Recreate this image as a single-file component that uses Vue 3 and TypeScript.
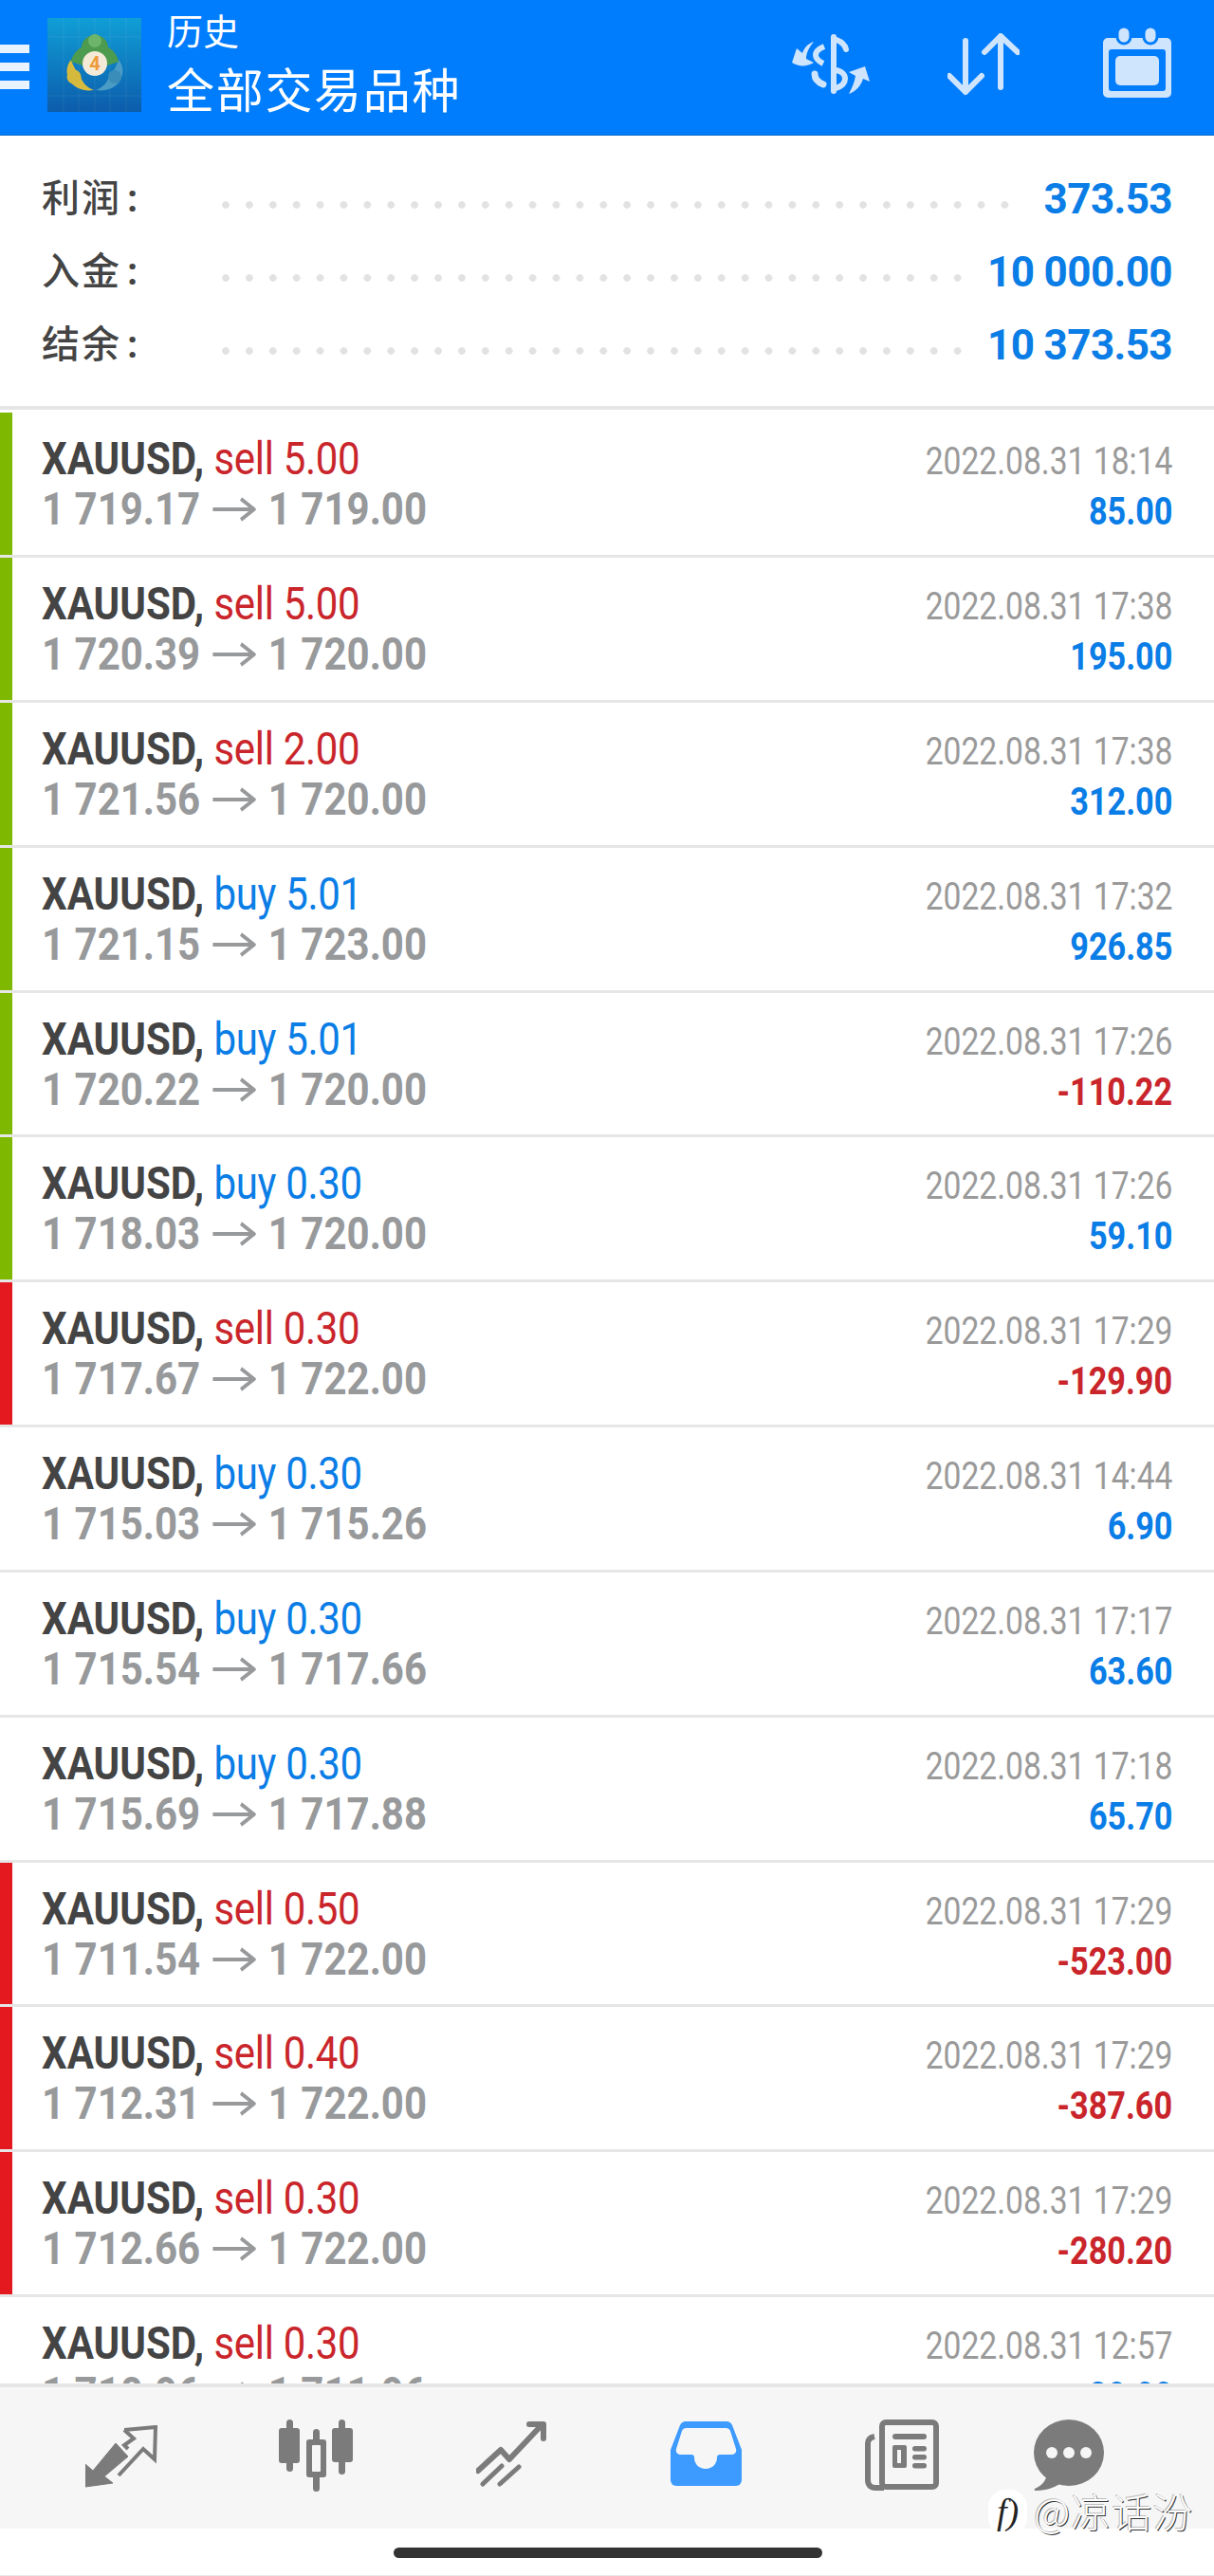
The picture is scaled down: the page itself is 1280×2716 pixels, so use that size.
<script setup lang="ts">
interface Trade { side: 'buy' | 'sell'; lot: string; open: string; close: string; time: string; profit: string; mark: '' | 'green' | 'red' }
const trades: Trade[] = [
  { side: 'sell', lot: '5.00', open: '1 719.17', close: '1 719.00', time: '2022.08.31 18:14', profit: '85.00', mark: 'green' },
  { side: 'sell', lot: '5.00', open: '1 720.39', close: '1 720.00', time: '2022.08.31 17:38', profit: '195.00', mark: 'green' },
  { side: 'sell', lot: '2.00', open: '1 721.56', close: '1 720.00', time: '2022.08.31 17:38', profit: '312.00', mark: 'green' },
  { side: 'buy', lot: '5.01', open: '1 721.15', close: '1 723.00', time: '2022.08.31 17:32', profit: '926.85', mark: 'green' },
  { side: 'buy', lot: '5.01', open: '1 720.22', close: '1 720.00', time: '2022.08.31 17:26', profit: '-110.22', mark: 'green' },
  { side: 'buy', lot: '0.30', open: '1 718.03', close: '1 720.00', time: '2022.08.31 17:26', profit: '59.10', mark: 'green' },
  { side: 'sell', lot: '0.30', open: '1 717.67', close: '1 722.00', time: '2022.08.31 17:29', profit: '-129.90', mark: 'red' },
  { side: 'buy', lot: '0.30', open: '1 715.03', close: '1 715.26', time: '2022.08.31 14:44', profit: '6.90', mark: '' },
  { side: 'buy', lot: '0.30', open: '1 715.54', close: '1 717.66', time: '2022.08.31 17:17', profit: '63.60', mark: '' },
  { side: 'buy', lot: '0.30', open: '1 715.69', close: '1 717.88', time: '2022.08.31 17:18', profit: '65.70', mark: '' },
  { side: 'sell', lot: '0.50', open: '1 711.54', close: '1 722.00', time: '2022.08.31 17:29', profit: '-523.00', mark: 'red' },
  { side: 'sell', lot: '0.40', open: '1 712.31', close: '1 722.00', time: '2022.08.31 17:29', profit: '-387.60', mark: 'red' },
  { side: 'sell', lot: '0.30', open: '1 712.66', close: '1 722.00', time: '2022.08.31 17:29', profit: '-280.20', mark: 'red' },
  { side: 'sell', lot: '0.30', open: '1 710.96', close: '1 711.96', time: '2022.08.31 12:57', profit: '30.00', mark: '' },
]
const summary = [
  { label: '利润', value: '373.53' },
  { label: '入金', value: '10 000.00' },
  { label: '结余', value: '10 373.53' },
]
</script>

<template>
  <div class="screen">
    <header class="header">
      <div class="burger"><i></i><i></i><i></i></div>
      <svg class="logo" viewBox="0 0 99 99">
        <defs>
          <linearGradient id="lg" x1="0" y1="0" x2="0" y2="1">
            <stop offset="0" stop-color="#109ed6" />
            <stop offset="1" stop-color="#0c5cab" />
          </linearGradient>
        </defs>
        <rect width="99" height="99" fill="url(#lg)" />
        <path d="M17 0V99M33 0V99M50 0V99M66 0V99M83 0V99M0 20H99M0 82H99" stroke="#fff" stroke-opacity=".07" />
        <path d="M25 44c-5 6-6 14-2 21 4 8 14 13 26 11-8-3-13-9-14-15-4-4-8-10-10-17z" fill="#d8bb3e" />
        <circle cx="28" cy="62" r="7.5" fill="#d5b93d" />
        <path d="M75 44c5 6 6 14 2 21-4 8-14 13-26 11 8-3 13-9 14-15 4-4 8-10 10-17z" fill="#4a9cc6" />
        <circle cx="71" cy="62" r="7" fill="#3a8db8" />
        <path d="M50 18c-8 0-14 6-14 13-6 3-10 9-11 15l12 4c2-5 7-8 13-8s11 3 13 8l12-4c-1-6-5-12-11-15 0-7-6-13-14-13z" fill="#4d9b4f" />
        <circle cx="50" cy="24" r="7" fill="#6cb56a" />
        <circle cx="50" cy="48" r="13" fill="#f3ead8" />
        <text x="50" y="55" class="logo-four">4</text>
      </svg>
      <div class="titles">
        <div class="title-small">历史</div>
        <div class="title-big">全部交易品种</div>
      </div>
      <div class="actions">
        <svg class="act-money" viewBox="0 0 84 64">
          <g fill="none" stroke="#cfe4fd" stroke-width="6">
            <path d="M45 3V60" stroke-linecap="round" />
            <path d="M48 6c5 2 9 5 10 10" stroke-linecap="round" />
            <path d="M47 38c7 1 10 5 10 9s-3 8-10 10" />
            <path d="M35 13c-7 3-9 6-9 9s2 6 8 9" />
            <path d="M25 42c0 5 4 9 9 11" stroke-width="7" stroke-linecap="round" />
          </g>
          <path d="M24 8c-6 2-10 6-12 12l-6-5-5 15c8 5 16 4 23 0l-8-4c0-6 3-12 8-18z" fill="#cfe4fd" />
          <path d="M61 63c8-3 13-9 15-16l7 3-5-16-17 6 7 4c-1 7-4 13-7 19z" fill="#cfe4fd" />
        </svg>
        <svg class="act-sort" viewBox="0 0 76 66">
          <path d="M19 8V62M2 45L19 62L36 45" stroke="#cfe4fd" stroke-width="6" stroke-linecap="round" stroke-linejoin="round" fill="none" />
          <path d="M56 57V3M39 20L56 3L74 20" stroke="#cfe4fd" stroke-width="6" stroke-linecap="round" stroke-linejoin="round" fill="none" />
        </svg>
        <svg class="act-cal" viewBox="0 0 72 74">
          <path fill-rule="evenodd" d="M5 10H67a5 5 0 0 1 5 5V68a5 5 0 0 1-5 5H5a5 5 0 0 1-5-5V15a5 5 0 0 1 5-5z M9 22a3 3 0 0 0-3 3V63a3 3 0 0 0 3 3H63a3 3 0 0 0 3-3V25a3 3 0 0 0-3-3z" fill="#cfe4fd" />
          <rect x="13" y="29" width="46" height="31" rx="5" fill="#cfe4fd" />
          <rect x="15" y="-2" width="14" height="18" rx="7" fill="#cfe4fd" stroke="#007dfc" stroke-width="3" />
          <rect x="43" y="-2" width="14" height="18" rx="7" fill="#cfe4fd" stroke="#007dfc" stroke-width="3" />
        </svg>
      </div>
    </header>

    <section class="summary">
      <div v-for="s in summary" :key="s.label" class="sum-row">
        <span class="sum-label">{{ s.label }}<b class="colon">:</b></span>
        <span class="dots"></span>
        <span class="sum-value">{{ s.value }}</span>
      </div>
    </section>

    <main class="list">
      <div v-for="(t, i) in trades" :key="i" class="row">
        <span v-if="t.mark" class="mark" :class="t.mark"></span>
        <div class="line">
          <span class="narrow"><b class="sym">XAUUSD,</b> <span :class="t.side">{{ t.side }} {{ t.lot }}</span></span>
          <span class="narrow-r time">{{ t.time }}</span>
        </div>
        <div class="line">
          <span class="narrow prices">{{ t.open }} <svg class="arrow" viewBox="0 0 52 26"><path d="M0 13H49M34 2L50 13L34 24" stroke="#97999b" stroke-width="4" fill="none" /></svg> {{ t.close }}</span>
          <span class="narrow-r profit" :class="{ loss: t.profit.startsWith('-') }">{{ t.profit }}</span>
        </div>
      </div>
    </main>

    <nav class="tabs">
      <svg class="tab t1" viewBox="0 0 76 66">
        <path d="M0 65V41L8 48L32 19L45 33L20 54L29 61Z" fill="#7b7b7b" stroke="#7b7b7b" stroke-width="1" stroke-linejoin="round" />
        <path d="M41 5L74 2L73 36L61 25L35 53M41 5L51 14L41 21L45 25" fill="none" stroke="#7b7b7b" stroke-width="4" />
      </svg>
      <svg class="tab t2" viewBox="0 0 78 76">
        <rect x="8" y="0" width="7" height="55" rx="3.5" fill="#7b7b7b" />
        <rect x="0" y="9" width="22" height="37" rx="3" fill="#7b7b7b" />
        <rect x="36" y="10" width="7" height="66" rx="3.5" fill="#7b7b7b" />
        <rect x="29" y="21" width="21" height="40" rx="3" fill="#7b7b7b" />
        <rect x="35" y="27" width="9" height="28" rx="1" fill="#f6f6f6" />
        <rect x="63" y="0" width="7" height="58" rx="3.5" fill="#7b7b7b" />
        <rect x="56" y="9" width="22" height="36" rx="3" fill="#7b7b7b" />
      </svg>
      <svg class="tab t3" viewBox="0 0 74 69">
        <path d="M2 52L26 30L35 40L68 5M56 3H71V18" fill="none" stroke="#7b7b7b" stroke-width="6" stroke-linecap="round" stroke-linejoin="round" />
        <path d="M7 66L27 47M25 66L45 48" fill="none" stroke="#7b7b7b" stroke-width="5" stroke-linecap="round" />
      </svg>
      <svg class="tab t4" viewBox="0 0 75 69">
        <path d="M16 0H59c3 0 5 2 6 4L75 30V62a6 6 0 0 1-6 6H6a6 6 0 0 1-6-6V30L10 4c1-2 3-4 6-4z" fill="#3d9bff" />
        <path d="M17 7H58c3 0 4 1 5 3L69 29c1 3-1 6-4 6H52c-2 0-3 1-3 3 0 7-5 12-12 12s-12-5-12-12c0-2-1-3-3-3H10c-3 0-5-3-4-6L12 10c1-2 2-3 5-3z" fill="#f6f6f6" />
      </svg>
      <svg class="tab t5" viewBox="0 0 78 75">
        <rect x="18" y="3" width="57" height="68" rx="4" fill="none" stroke="#7b7b7b" stroke-width="6" />
        <path d="M10 18c-5 1-7 3-7 7V64c0 5 3 8 8 8H20" fill="none" stroke="#7b7b7b" stroke-width="6" />
        <rect x="29" y="15" width="36" height="6" rx="3" fill="#7b7b7b" />
        <path fill-rule="evenodd" d="M31 27H42a2 2 0 0 1 2 2V49a2 2 0 0 1-2 2H31a2 2 0 0 1-2-2V29a2 2 0 0 1 2-2z M34 32V46H38V32z" fill="#7b7b7b" />
        <rect x="50" y="28" width="15" height="5.5" rx="2.7" fill="#7b7b7b" />
        <rect x="50" y="37" width="15" height="5.5" rx="2.7" fill="#7b7b7b" />
        <rect x="50" y="46" width="15" height="5.5" rx="2.7" fill="#7b7b7b" />
      </svg>
      <svg class="tab t6" viewBox="0 0 74 75">
        <ellipse cx="37" cy="35" rx="37" ry="35" fill="#7b7b7b" />
        <path d="M14 56C14 64 8 70 1 73c-1 1 0 2 1 2C14 75 24 71 32 65Z" fill="#7b7b7b" />
        <circle cx="19" cy="35" r="6" fill="#f6f6f6" />
        <circle cx="37" cy="35" r="6" fill="#f6f6f6" />
        <circle cx="55" cy="35" r="6" fill="#f6f6f6" />
      </svg>
    </nav>
    <div class="home"><span></span></div>
    <div class="watermark"><span class="wm-logo">f)</span><span class="wm-text">@凉话汾</span></div>
  </div>
</template>

<style scoped>
.screen {
  width: 1280px;
  height: 2716px;
  overflow: hidden;
  position: relative;
  background: #fff;
  display: flex;
  flex-direction: column;
  font-family: Roboto, "Noto Sans CJK SC", sans-serif;
}
.header {
  height: 142px;
  flex: none;
  background: #007dfc;
  display: flex;
  align-items: center;
  box-shadow: 0 1px 0 #0a6ac6;
}
.burger {
  width: 31px;
  flex: none;
  display: flex;
  flex-direction: column;
  gap: 10px;
  margin-top: -1px;
}
.burger i { display: block; height: 9px; background: #e8f3ff; }
.logo { width: 99px; height: 99px; margin: -5px 0 0 19px; flex: none; }
.logo-four { font: 700 20px Roboto, sans-serif; fill: #ee9a3a; text-anchor: middle; }
.titles {
  margin: 9px 0 0 27px;
  align-self: flex-start;
  color: #fff;
  font-family: "Noto Sans CJK SC", sans-serif;
  font-weight: 400;
  display: flex;
  flex-direction: column;
}
.title-small { font-size: 38px; line-height: 44px; }
.title-big { font-size: 50px; line-height: 60px; margin-top: 9px; letter-spacing: 1.7px; }
.actions { margin-left: auto; display: flex; align-items: center; padding-right: 45px; }
.act-money { width: 84px; height: 64px; margin-right: 81px; margin-top: -6px; }
.act-sort { width: 76px; height: 66px; margin-right: 88px; margin-top: -6px; }
.act-cal { width: 72px; height: 74px; margin-top: -8px; overflow: visible; }

.summary {
  height: 290px;
  flex: none;
  box-sizing: border-box;
  padding: 27.5px 44px 0 44px;
  border-bottom: 4px solid #e6e6e6;
  display: flex;
  flex-direction: column;
}
.sum-row { display: flex; align-items: center; height: 77px; }
.sum-label { font-family: "Noto Sans CJK SC", sans-serif; font-size: 40px; font-weight: 500; color: #444; width: 190px; flex: none; letter-spacing: 2px; margin-top: -4px; }
.colon { font-weight: 700; margin-left: 6px; font-family: Roboto, sans-serif; }
.dots {
  flex: 1;
  height: 8px;
  margin: 16px 24px 0 0;
  background-image: radial-gradient(circle at 4px 4px, #e2e2e2 3.5px, transparent 4px);
  background-size: 24.9px 8px;
  background-repeat: repeat-x;
}
.sum-value { font-weight: 700; font-size: 44px; letter-spacing: -0.6px; color: #0a7de6; white-space: nowrap; margin-top: 3px; }

.list { flex: 1; min-height: 0; overflow: hidden; padding-top: 3.25px; }
.row {
  height: 152.83px;
  box-sizing: border-box;
  border-bottom: 3px solid #e6e6e6;
  position: relative;
  padding: 22px 44px 0;
}
.mark { position: absolute; left: 0; top: 0; bottom: 0; width: 13px; }
.mark.green { background: #7fb800; }
.mark.red { background: #e3191f; }
.line { display: flex; justify-content: space-between; align-items: baseline; height: 53px; }
.narrow, .narrow-r { display: inline-block; white-space: nowrap; }
.narrow { transform: scaleX(.875); transform-origin: left center; font-size: 48px; line-height: 53px; }
.narrow-r { transform-origin: right center; }
.sym { color: #444; font-weight: 700; }
.sell { color: #c9252b; letter-spacing: -0.35px; }
.buy { color: #0a7de6; letter-spacing: -0.35px; }
.prices { color: #97999b; font-weight: 700; }
.arrow { width: 52px; height: 26px; vertical-align: 3px; margin: 0 3px; }
.time { color: #9a9a9a; font-size: 40px; transform: scaleX(.84); }
.profit { color: #0a7de6; font-weight: 700; font-size: 40px; transform: scaleX(.855); }
.profit.loss { color: #c9252b; }

.tabs {
  flex: none;
  height: 153px;
  box-sizing: border-box;
  background: #f6f6f6;
  border-top: 4px solid #e6e6e6;
  display: flex;
  align-items: flex-start;
  gap: 130px;
  padding-left: 90px;
}
.t1 { width: 76px; height: 66px; margin-top: 40px; }
.t2 { width: 78px; height: 76px; margin: 34px 0 0 -2px; }
.t3 { width: 74px; height: 69px; margin-top: 36px; }
.t4 { width: 75px; height: 69px; margin: 36px 0 0 1px; }
.t5 { width: 78px; height: 75px; margin-top: 34px; }
.t6 { width: 74px; height: 75px; margin: 34px 0 0 -30px; }
.home {
  flex: none;
  height: 50px;
  box-sizing: border-box;
  background: #fff;
  border-bottom: 1px solid #e8e8e8;
  display: flex;
  justify-content: center;
  padding-top: 20px;
}
.home span { width: 452px; height: 11px; border-radius: 6px; background: #333; margin-left: 1px; }
.watermark {
  position: absolute;
  left: 1042px;
  top: 2625px;
  display: flex;
  align-items: flex-start;
  font-family: "Noto Sans CJK SC", sans-serif;
}
.wm-logo {
  width: 41px;
  height: 48px;
  border-radius: 18px;
  background: #fff;
  color: #222;
  font-family: "Liberation Serif", serif;
  font-style: italic;
  font-size: 38px;
  line-height: 46px;
  text-align: center;
}
.wm-text {
  margin-left: 7px;
  color: #fff;
  font-size: 42px;
  font-weight: 300;
  letter-spacing: 1px;
  line-height: 44px;
  text-shadow: 1px 1px 0 #333, -1px -1px 0 #bbb;
}
</style>

<style>
html, body { margin: 0; background: #fff; }
</style>
